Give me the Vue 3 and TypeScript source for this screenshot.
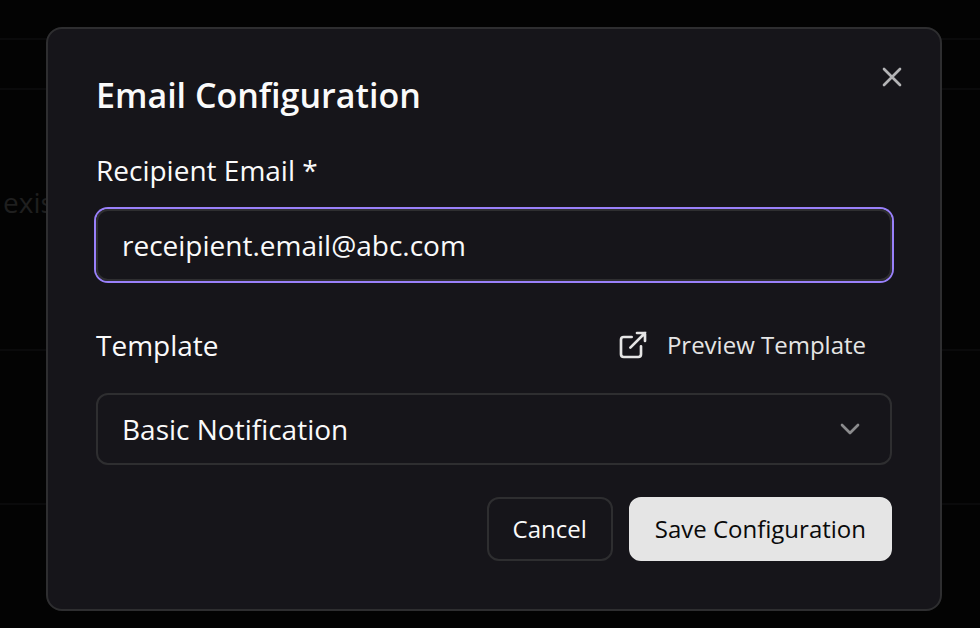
<script setup lang="ts">
import { ref } from 'vue'

const email = ref<string>('receipient.email@abc.com')
const template = ref<string>('Basic Notification')
const templates: string[] = ['Basic Notification']
</script>

<template>
  <div class="page">
    <div class="backdrop">
      <div class="band"></div>
      <div class="band"></div>
      <div class="band band-main"><p>exis</p></div>
      <div class="band"></div>
    </div>

    <div class="overlay">
      <form class="dialog" role="dialog" aria-labelledby="dialog-title" @submit.prevent>
        <header class="head">
          <h2 id="dialog-title">Email Configuration</h2>
          <button type="button" class="close" aria-label="Close">
            <svg class="icon" viewBox="0 0 24 24"><path d="M18 6 6 18M6 6l12 12" /></svg>
          </button>
        </header>

        <label class="label" for="recipient">Recipient Email *</label>
        <input id="recipient" v-model="email" class="field active" type="text" />

        <div class="row">
          <label class="label" for="template">Template</label>
          <button type="button" class="preview">
            <svg class="icon" viewBox="0 0 24 24">
              <path d="M18 13v6a2 2 0 0 1-2 2H5a2 2 0 0 1-2-2V8a2 2 0 0 1 2-2h6" />
              <path class="arrow" d="M15 3h6v6M10 14 21 3" />
            </svg>
            <span>Preview Template</span>
          </button>
        </div>
        <div class="select">
          <select id="template" v-model="template" class="field">
            <option v-for="t in templates" :key="t">{{ t }}</option>
          </select>
          <svg class="icon chevron" viewBox="0 0 24 24"><path d="m6 9 6 6 6-6" /></svg>
        </div>

        <footer class="actions">
          <button type="button" class="btn outline">Cancel</button>
          <button type="submit" class="btn primary">Save Configuration</button>
        </footer>
      </form>
    </div>
  </div>
</template>

<style>
body {
  background: #030303;
}
</style>

<style scoped>
.page {
  position: relative;
  min-height: 100vh;
  overflow: hidden;
  font-family: 'Open Sans', 'Noto Sans', sans-serif;
  color: #fafafa;
}
.page * {
  box-sizing: border-box;
}
.backdrop {
  position: absolute;
  inset: 0;
  display: grid;
  grid-template-rows: 40px 50px 261px 154px;
  font-size: 28px;
  line-height: 40px;
  color: #1f1f1f;
}
.band {
  border-bottom: 2px solid #0a0a0b;
}
.band-main {
  padding: 92px 3px 0;
}
.band p {
  margin: 0;
}
.overlay {
  position: relative;
  padding: 27px 38px 17px 46px;
}
.dialog {
  display: flex;
  flex-direction: column;
  padding: 48px;
  border: 2px solid #2e2e30;
  border-radius: 16px;
  background: #16151a;
}
.head {
  display: flex;
  align-items: flex-start;
  justify-content: space-between;
  margin-bottom: 40px;
}
h2 {
  margin: 0;
  font-size: 34px;
  line-height: 36px;
  font-weight: 600;
}
button {
  font-family: inherit;
  font-size: 24px;
  line-height: 32px;
  font-weight: 500;
  cursor: pointer;
}
.icon {
  display: block;
  width: 32px;
  height: 32px;
  fill: none;
  stroke: currentColor;
  stroke-width: 2;
  stroke-linecap: round;
  stroke-linejoin: round;
}
.arrow {
  stroke-linejoin: miter;
}
.close {
  margin: -16px;
  padding: 0;
  border: 0;
  background: none;
  color: #b4b4b6;
}
.label {
  font-size: 28px;
  line-height: 34px;
  font-weight: 500;
}
.field {
  width: 100%;
  height: 72px;
  padding: 0 24px;
  border: 2px solid #2e2e30;
  border-radius: 12px;
  outline: none;
  background: transparent;
  color: inherit;
  font-family: inherit;
  font-size: 28px;
  line-height: 40px;
  appearance: none;
}
.active {
  margin-top: 22px;
  box-shadow: 0 0 0 2px #9980fa;
}
.row {
  display: flex;
  align-items: center;
  justify-content: space-between;
  margin: 32px 0 16px;
}
.preview {
  display: flex;
  align-items: center;
  gap: 18px;
  height: 64px;
  padding: 0 24px;
  border: 2px solid transparent;
  background: none;
  color: #e5e5e5;
}
.select {
  position: relative;
}
.chevron {
  position: absolute;
  top: 20px;
  right: 26px;
  color: #8b8b8d;
  pointer-events: none;
}
.actions {
  display: flex;
  justify-content: flex-end;
  gap: 16px;
  margin-top: 32px;
}
.btn {
  height: 64px;
  padding: 0 24px;
  border: 2px solid #2e2e30;
  border-radius: 12px;
}
.outline {
  background: transparent;
  color: #fafafa;
}
.primary {
  border-color: #e5e5e5;
  background: #e5e5e5;
  color: #0a0a0a;
}
</style>
